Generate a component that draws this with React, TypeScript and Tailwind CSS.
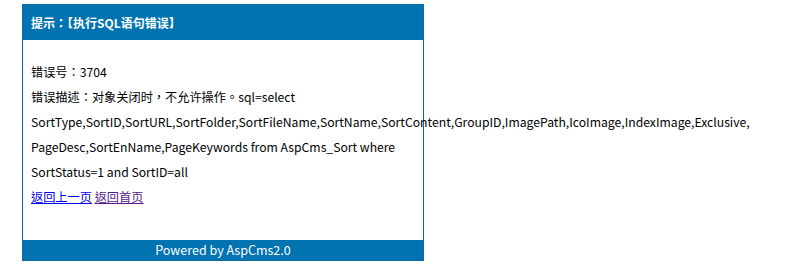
const FONT = '"Noto Sans CJK TC", "Noto Sans", sans-serif'

export default function App() {
  return (
    <div className="bg-white w-[791px] h-[268px] pt-[4px] pl-[22px]" style={{ fontFamily: FONT }}>
      <div className="w-[402px] border border-[#0b6aa2]">
        <div className="h-[35px] bg-[#0073b0] pl-[8px] flex items-center text-[12px] font-bold text-white">
          提示：【执行SQL语句错误】
        </div>
        <div className="h-[200px] pt-[20px] pl-[8px] text-[12.2px] leading-[25px] text-black">
          <div>错误号：3704</div>
          <div className="w-[386px]">
            错误描述：对象关闭时，不允许操作。sql=select SortType,SortID,SortURL,SortFolder,SortFileName,SortName,SortContent,GroupID,ImagePath,IcoImage,IndexImage,Exclusive,
            PageDesc,SortEnName,PageKeywords from AspCms_Sort where SortStatus=1 and SortID=all
          </div>
          <div>
            <a href="#" className="text-[#0000ee] underline">返回上一页</a>{' '}
            <a href="#" className="text-[#551a8b] underline">返回首页</a>
          </div>
        </div>
        <div className="h-[20px] bg-[#0073b0] text-white text-[12.5px] flex items-center justify-center">
          Powered by AspCms2.0
        </div>
      </div>
    </div>
  )
}
